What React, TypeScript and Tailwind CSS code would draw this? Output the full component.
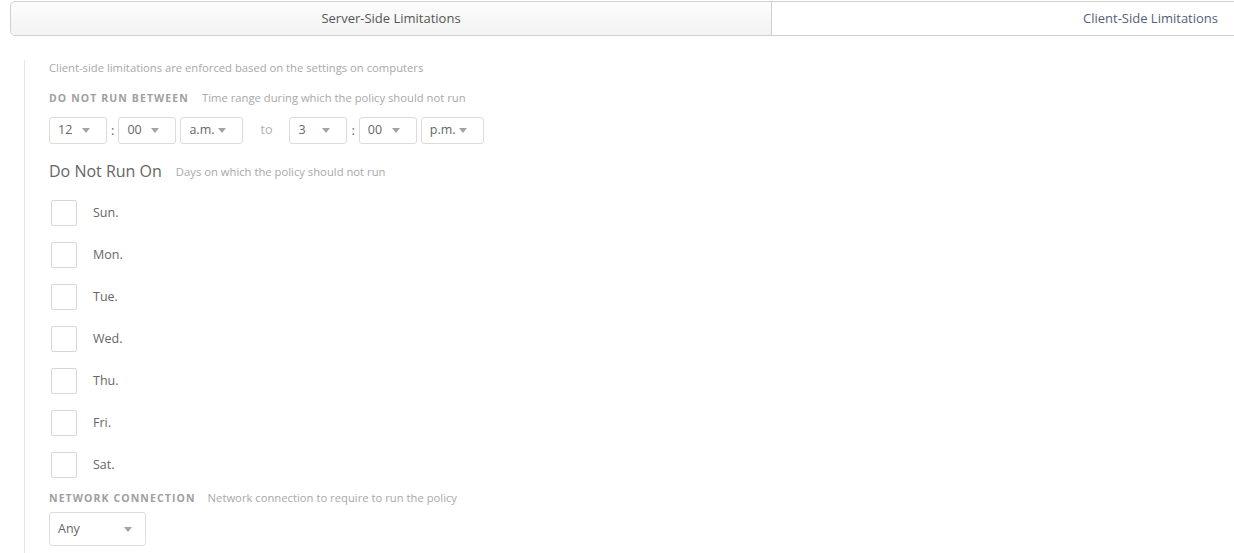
import React from "react";

const font = { fontFamily: '"Open Sans", "Liberation Sans", sans-serif' };

function Caret() {
    return (
        <svg width="8" height="5" viewBox="0 0 8 5" className="shrink-0">
            <path d="M0 0h8L4 5z" fill="#a3a3a3" />
        </svg>
    );
}

function Select({ value, width }: { value: string; width: string }) {
    return (
        <div className={`flex h-[27px] items-center justify-between rounded-[3px] border border-[#dcdcdc] bg-white pl-[8px] pr-[16px] text-[12.5px] text-[#666] ${width}`}>
            <span>{value}</span>
            <Caret />
        </div>
    );
}

const days = ["Sun.", "Mon.", "Tue.", "Wed.", "Thu.", "Fri.", "Sat."];

export default function App() {
    return (
        <div className="h-[553px] w-[1234px] overflow-hidden bg-white" style={font}>
            <div className="w-[1530px]">
                {/* tabs */}
                <div className="ml-[10px] mt-[1px] flex h-[35px] rounded-l-[5px] border border-[#cfcfcf]">
                    <div className="flex w-[761px] items-center justify-center rounded-l-[5px] border-r border-[#cfcfcf] bg-gradient-to-b from-[#fcfcfc] to-[#f3f3f3] text-[13px] text-[#555]">
                        Server-Side Limitations
                    </div>
                    <div className="flex flex-1 items-center justify-center bg-white text-[13px] text-[#56607a]">
                        Client-Side Limitations
                    </div>
                </div>

                {/* client side panel */}
                <div className="ml-[24px] mt-[24px] border-l border-[#e6e6e6] pb-[20px] pl-[24px] pt-[1px]">
                    <p className="text-[11.25px] leading-[14px] text-[#a8a8a8]">
                        Client-side limitations are enforced based on the settings on computers
                    </p>

                    <div className="mt-[16px] flex items-center leading-[14px]">
                        <span className="text-[10.5px] font-bold tracking-[1.1px] text-[#a0a0a0]">DO NOT RUN BETWEEN</span>
                        <span className="ml-[13px] text-[11.25px] text-[#a8a8a8]">Time range during which the policy should not run</span>
                    </div>

                    <div className="mt-[12px] flex items-center">
                        <Select value="12" width="w-[58px]" />
                        <span className="mx-[4px] text-[13px] text-[#666]">:</span>
                        <Select value="00" width="w-[58px]" />
                        <div className="w-[4px]" />
                        <Select value="a.m." width="w-[63px]" />
                        <span className="mx-[17px] text-[12.5px] text-[#b0b0b0]">to</span>
                        <Select value="3" width="w-[58px]" />
                        <span className="mx-[4px] text-[13px] text-[#666]">:</span>
                        <Select value="00" width="w-[58px]" />
                        <div className="w-[4px]" />
                        <Select value="p.m." width="w-[63px]" />
                    </div>

                    <div className="mt-[16px] flex h-[22px] items-center">
                        <span className="text-[16px] text-[#666]">Do Not Run On</span>
                        <span className="ml-[14px] mt-[2px] text-[11.25px] text-[#a8a8a8]">Days on which the policy should not run</span>
                    </div>

                    <div className="mt-[18px] flex flex-col gap-[16px] pl-[2px]">
                        {days.map((d) => (
                            <label key={d} className="flex h-[26px] items-center">
                                <span className="h-[26px] w-[26px] rounded-[2px] border border-[#d6d6d6] bg-white" />
                                <span className="ml-[16px] text-[12.5px] text-[#666]">{d}</span>
                            </label>
                        ))}
                    </div>

                    <div className="mt-[13px] flex items-center leading-[14px]">
                        <span className="text-[10.5px] font-bold tracking-[1.1px] text-[#a0a0a0]">NETWORK CONNECTION</span>
                        <span className="ml-[12px] text-[11.25px] text-[#a8a8a8]">Network connection to require to run the policy</span>
                    </div>

                    <div className="mt-[7px] flex h-[34px] w-[97px] items-center justify-between rounded-[3px] border border-[#dcdcdc] pl-[8px] pr-[13px] text-[12.5px] text-[#666]">
                        <span>Any</span>
                        <Caret />
                    </div>
                </div>
            </div>
        </div>
    );
}
